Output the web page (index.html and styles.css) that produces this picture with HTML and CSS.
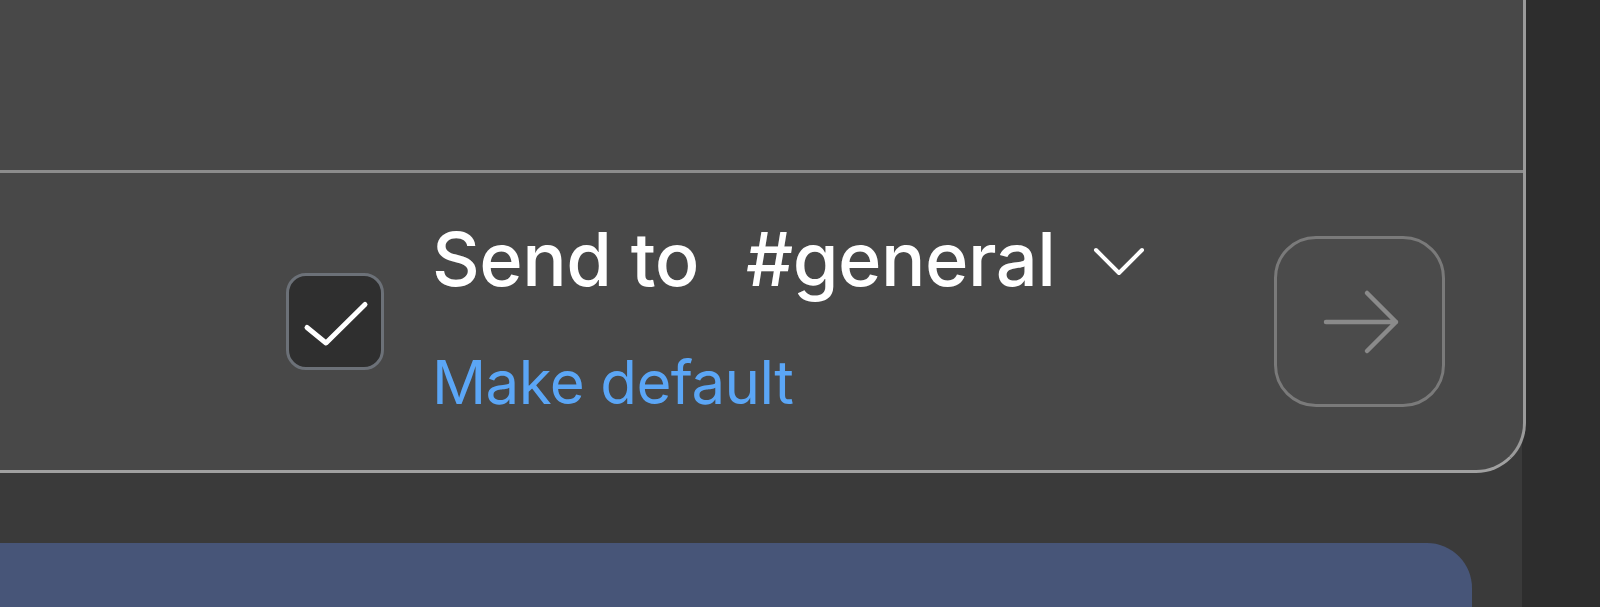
FILE: index.html
```html
<!DOCTYPE html>
<html lang="en">
<head>
<meta charset="utf-8">
<title>Send to channel</title>
<link rel="stylesheet" href="styles.css">
</head>
<body>
  <div class="app">
    <main class="main">
      <section class="composer">
        <div class="composer-body"></div>
        <div class="composer-footer">
          <div class="checkbox" role="checkbox" aria-checked="true">
            <svg class="check-icon" viewBox="0 0 70 50" width="70" height="50" aria-hidden="true">
              <path d="M7 30.5 L26 46 L65 7.5" fill="none" stroke="#ffffff" stroke-width="5" stroke-linecap="round" stroke-linejoin="round"/>
            </svg>
          </div>
          <div class="target">
            <div class="target-line">
              <span class="target-label">Send to</span>
              <span class="target-channel">#general</span>
              <svg class="chevron" viewBox="0 0 56 34" width="56" height="34" aria-hidden="true">
                <path d="M5 6 L28 29 L51 6" fill="none" stroke="#ffffff" stroke-width="4" stroke-linecap="round" stroke-linejoin="round"/>
              </svg>
            </div>
            <a class="make-default" href="#">Make default</a>
          </div>
          <button class="send-btn" type="button" aria-label="Send">
            <svg viewBox="0 0 90 70" width="90" height="70" aria-hidden="true">
              <path d="M7 35 H77 M48 6 L77 35 L48 64" fill="none" stroke="#8a8a8a" stroke-width="4.5" stroke-linecap="round" stroke-linejoin="round"/>
            </svg>
          </button>
        </div>
      </section>
      <div class="spacer"></div>
      <section class="message-card"></section>
    </main>
    <aside class="sidebar"></aside>
  </div>
</body>
</html>
```
FILE: styles.css
```css
html, body {
  margin: 0;
  padding: 0;
  height: 100%;
  overflow: hidden;
}

body {
  background: #2d2d2d;
  font-family: "Inter", "Noto Sans", sans-serif;
}

.app {
  display: flex;
  height: 607px;
}

.main {
  width: 1522px;
  flex: none;
  background: #3a3a3a;
  display: flex;
  flex-direction: column;
}

.sidebar {
  flex: 1;
  background: #2d2d2d;
}

.composer {
  width: 1526px;
  box-sizing: border-box;
  background: #484848;
  border-right: 3px solid #9a9a9a;
  border-bottom: 3px solid #a0a0a0;
  border-bottom-right-radius: 50px;
  position: relative;
  z-index: 1;
}

.composer-body {
  height: 170px;
  border-bottom: 3px solid #8c8c8c;
}

.composer-footer {
  height: 297px;
  display: flex;
  align-items: center;
  padding-left: 286px;
  padding-right: 78px;
}

.checkbox {
  width: 92px;
  height: 91px;
  border: 3px solid #6c7178;
  border-radius: 20px;
  background: #2f2f2f;
  display: flex;
  align-items: center;
  justify-content: center;
  flex: none;
}

.check-icon {
  display: block;
}

.target {
  display: flex;
  flex-direction: column;
  margin-left: 48px;
  padding-bottom: 9px;
}

.target-line {
  display: flex;
  align-items: center;
  height: 74px;
  color: #ffffff;
  font-size: 74px;
  line-height: 74px;
  font-weight: 500;
  letter-spacing: -0.5px;
}

.target-channel {
  margin-left: 47px;
}

.chevron {
  margin-left: 36px;
  margin-top: 4px;
  display: block;
}

.make-default {
  margin-top: 56px;
  font-size: 60px;
  line-height: 60px;
  font-weight: 400;
  color: #5ba6f6;
  text-decoration: none;
  letter-spacing: -0.6px;
}

.send-btn {
  margin-left: auto;
  width: 171px;
  height: 171px;
  border: 3px solid #7a7a7a;
  border-radius: 42px;
  background: #4b4b4b;
  display: flex;
  align-items: center;
  justify-content: center;
  padding: 0;
  flex: none;
}

.send-btn svg {
  display: block;
  margin-left: 8px;
}

.spacer {
  height: 70px;
  flex: none;
}

.message-card {
  flex: 1;
  margin-right: 50px;
  background: #475578;
  border-top-right-radius: 45px;
}
```
